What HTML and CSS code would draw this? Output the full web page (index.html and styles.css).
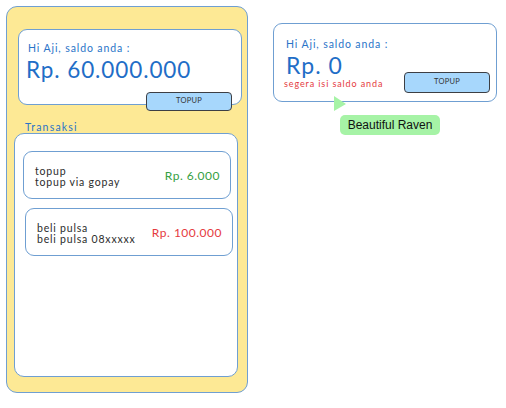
FILE: index.html
```html
<!DOCTYPE html>
<html>
<head>
<meta charset="utf-8">
<link rel="stylesheet" href="styles.css">
</head>
<body>
<div class="stage">
  <div class="phone">
    <div class="balance-card">
      <div class="greet">Hi Aji, saldo anda :</div>
      <div class="amount">Rp. 60.000.000</div>
      <div class="topup topup-left">TOPUP</div>
    </div>
    <div class="section-label">Transaksi</div>
    <div class="tx-panel">
      <div class="tx-item">
        <div class="tx-text">
          <div>topup</div>
          <div>topup via gopay</div>
        </div>
        <div class="tx-amount plus">Rp. 6.000</div>
      </div>
      <div class="tx-item shifted">
        <div class="tx-text">
          <div>beli pulsa</div>
          <div>beli pulsa 08xxxxx</div>
        </div>
        <div class="tx-amount minus">Rp. 100.000</div>
      </div>
    </div>
  </div>
  <div class="side">
    <div class="balance-card small">
      <div class="greet">Hi Aji, saldo anda :</div>
      <div class="small-row">
        <div>
          <div class="amount zero">Rp. 0</div>
          <div class="warn">segera isi saldo anda</div>
        </div>
        <div class="topup">TOPUP</div>
      </div>
      <div class="tooltip">
        <svg class="pointer" width="14" height="16" viewBox="0 0 14 16"><polygon points="1,0 13,8 1,15" fill="#a6f3a6"/></svg>
        <div class="tip-box">Beautiful Raven</div>
      </div>
    </div>
  </div>
</div>
</body>
</html>
```

FILE: styles.css
```css
* { box-sizing: border-box; }
html, body { margin: 0; padding: 0; background: #ffffff; }
body {
  width: 506px;
  height: 408px;
  overflow: hidden;
  font-family: "Lato", "DejaVu Sans", sans-serif;
}
.stage {
  display: flex;
  align-items: flex-start;
  padding: 6px 0 0 6px;
  gap: 25px;
}
.phone {
  width: 242px;
  height: 387px;
  background: #fde995;
  border: 1.5px solid #6f9fd2;
  border-radius: 11px;
  padding: 22px 6px 0 7px;
  display: flex;
  flex-direction: column;
}
.balance-card {
  position: relative;
  background: #fff;
  border: 1.5px solid #6f9fd2;
  border-radius: 9px;
}
.phone .balance-card {
  margin-left: 4px;
  width: 224px;
  height: 76px;
  padding: 11px 0 0 9px;
}
.greet {
  color: #2a74c8;
  font-size: 10.5px;
  letter-spacing: 0.9px;
  line-height: 14px;
}
.amount {
  color: #1f6ec7;
  font-size: 22.5px;
  line-height: 26px;
  letter-spacing: 0.9px;
  margin-top: 2px;
  margin-left: -2px;
}
.topup {
  width: 86px;
  height: 19px;
  background: #a7d7fc;
  border: 1.5px solid #3d3f44;
  border-radius: 4px;
  color: #333;
  font-size: 7.5px;
  line-height: 16px;
  text-align: center;
  letter-spacing: 0.3px;
}
.topup-left {
  position: absolute;
  right: 9px;
  bottom: -7px;
}
.section-label {
  color: #2a74c8;
  font-size: 10.5px;
  line-height: 12px;
  letter-spacing: 1.2px;
  margin: 16px 0 0 11px;
}
.tx-panel {
  width: 224px;
  height: 244px;
  background: #fff;
  border: 1.5px solid #6f9fd2;
  border-radius: 10px;
  padding: 17px 0 0 8px;
  display: flex;
  flex-direction: column;
  gap: 9px;
}
.tx-item {
  width: 208px;
  height: 48px;
  border: 1.5px solid #6f9fd2;
  border-radius: 9px;
  display: flex;
  align-items: center;
  justify-content: space-between;
  padding: 4px 10px 0 11px;
}
.tx-item.shifted { margin-left: 2px; }
.tx-text {
  color: #2c2c2c;
  font-size: 10.5px;
  line-height: 11px;
  letter-spacing: 0.8px;
}
.tx-amount {
  font-size: 12px;
  letter-spacing: 0.5px;
  margin-top: -4px;
}
.plus { color: #35a043; }
.minus { color: #e53a3e; }
.side {
  padding-top: 17px;
}
.balance-card.small {
  width: 224px;
  height: 79px;
  padding: 13px 0 0 12px;
}
.small-row {
  display: flex;
  justify-content: space-between;
  align-items: flex-end;
  padding-right: 6px;
}
.small .amount {
  margin-top: 2px;
  margin-left: 0;
  font-size: 23px;
  line-height: 24px;
  letter-spacing: 1px;
}
.warn {
  color: #e53a3e;
  font-size: 9px;
  margin-left: -2px;
  letter-spacing: 0.9px;
  line-height: 12px;
  margin-top: 1px;
}
.small .topup {
  height: 21px;
  line-height: 18px;
  margin-bottom: -3px;
}
.tooltip {
  position: absolute;
  left: 59px;
  top: 72px;
  width: 110px;
}
.pointer {
  display: block;
}
.tip-box {
  margin: 3px 0 0 7px;
  width: 100px;
  height: 20px;
  background: #a6f3a6;
  border-radius: 5px;
  color: #111;
  font-family: "Liberation Sans", Arial, sans-serif;
  font-size: 12px;
  line-height: 20px;
  text-align: center;
}
```
